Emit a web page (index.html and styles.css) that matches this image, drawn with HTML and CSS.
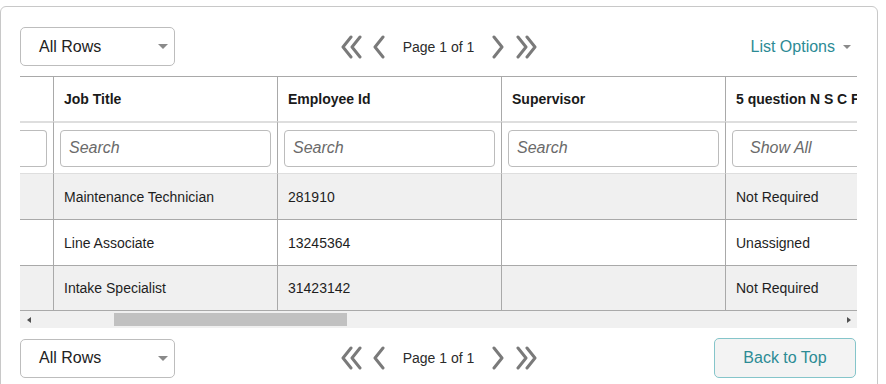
FILE: index.html
```html
<!DOCTYPE html>
<html>
<head>
<meta charset="utf-8">
<link rel="stylesheet" href="styles.css">
</head>
<body>
<div class="panel">
  <div class="toolbar">
    <div class="tb-left">
      <div class="select"><span>All Rows</span><span class="caret"></span></div>
    </div>
    <div class="pager">
      <svg class="chev dbl" width="22" height="24" viewBox="0 0 22 24"><polyline points="10,2 2,12 10,22"/><polyline points="19,2 11,12 19,22"/></svg>
      <svg class="chev" width="13" height="24" viewBox="0 0 13 24"><polyline points="11,2 3,12 11,22"/></svg>
      <span class="page-text">Page 1 of 1</span>
      <svg class="chev" width="13" height="24" viewBox="0 0 13 24"><polyline points="2,2 10,12 2,22"/></svg>
      <svg class="chev dbl" width="22" height="24" viewBox="0 0 22 24"><polyline points="3,2 11,12 3,22"/><polyline points="12,2 20,12 12,22"/></svg>
    </div>
    <div class="tb-right">
      <span class="list-options">List Options</span><span class="caret small"></span>
    </div>
  </div>

  <div class="grid-wrap">
    <table class="grid">
      <colgroup>
        <col class="c0"><col class="c1"><col class="c1"><col class="c1"><col class="c2">
      </colgroup>
      <thead>
        <tr class="head">
          <th></th><th>Job Title</th><th>Employee Id</th><th>Supervisor</th><th>5 question N S C F</th>
        </tr>
        <tr class="filters">
          <td><div class="inp stub"></div></td>
          <td><div class="inp">Search</div></td>
          <td><div class="inp">Search</div></td>
          <td><div class="inp">Search</div></td>
          <td><div class="inp showall">Show All</div></td>
        </tr>
      </thead>
      <tbody>
        <tr class="alt"><td></td><td>Maintenance Technician</td><td>281910</td><td></td><td>Not Required</td></tr>
        <tr><td></td><td>Line Associate</td><td>13245364</td><td></td><td>Unassigned</td></tr>
        <tr class="alt last"><td></td><td>Intake Specialist</td><td>31423142</td><td></td><td>Not Required</td></tr>
      </tbody>
    </table>
    <div class="hscroll">
      <span class="arrow left"></span>
      <div class="thumb"></div>
      <span class="arrow right"></span>
    </div>
  </div>

  <div class="toolbar bottom">
    <div class="tb-left">
      <div class="select"><span>All Rows</span><span class="caret"></span></div>
    </div>
    <div class="pager">
      <svg class="chev dbl" width="22" height="24" viewBox="0 0 22 24"><polyline points="10,2 2,12 10,22"/><polyline points="19,2 11,12 19,22"/></svg>
      <svg class="chev" width="13" height="24" viewBox="0 0 13 24"><polyline points="11,2 3,12 11,22"/></svg>
      <span class="page-text">Page 1 of 1</span>
      <svg class="chev" width="13" height="24" viewBox="0 0 13 24"><polyline points="2,2 10,12 2,22"/></svg>
      <svg class="chev dbl" width="22" height="24" viewBox="0 0 22 24"><polyline points="3,2 11,12 3,22"/><polyline points="12,2 20,12 12,22"/></svg>
    </div>
    <div class="tb-right">
      <button class="back-top">Back to Top</button>
    </div>
  </div>
</div>
</body>
</html>
```

FILE: styles.css
```css
* { box-sizing: border-box; }
html, body { margin: 0; padding: 0; background: #fff; }
body {
  font-family: "Liberation Sans", Arial, sans-serif;
  color: #222;
  overflow: hidden;
  height: 384px;
}
.panel {
  margin-top: 6px;
  width: 878px;
  height: 384px;
  border: 1px solid #c8c8c8;
  border-radius: 6px;
  padding: 20px 19px 0 19px;
}
.toolbar {
  display: grid;
  grid-template-columns: 1fr auto 1fr;
  align-items: center;
  height: 39px;
}
.toolbar.bottom { margin-top: 10px; height: 40px; }
.tb-left { display: flex; }
.tb-right { display: flex; justify-content: flex-end; align-items: center; }
.select {
  width: 155px;
  height: 39px;
  border: 1px solid #bdbdbd;
  border-radius: 5px;
  display: flex;
  align-items: center;
  justify-content: space-between;
  padding: 0 6px 0 18px;
  font-size: 16px;
  color: #222;
}
.caret {
  width: 0; height: 0;
  border-left: 5px solid transparent;
  border-right: 5px solid transparent;
  border-top: 5px solid #8a8a8a;
}
.caret.small {
  border-left-width: 4px;
  border-right-width: 4px;
  border-top-width: 4px;
  margin-left: 8px;
  margin-right: 7px;
}
.pager {
  display: flex;
  align-items: center;
  height: 39px;
}
.chev { display: block; }
.chev polyline {
  fill: none;
  stroke: #7a7a7a;
  stroke-width: 3;
  stroke-linecap: round;
  stroke-linejoin: round;
}
.pager .chev.dbl:first-child { margin-right: 9px; }
.page-text {
  font-size: 14px;
  color: #2b2b2b;
  margin: 0 18px;
}
.pager .chev.dbl:last-child { margin-left: 10px; }
.list-options {
  font-size: 16px;
  color: #2c8b95;
}
.grid-wrap {
  margin-top: 10px;
  width: 837px;
  overflow: hidden;
}
.grid {
  table-layout: fixed;
  border-collapse: separate;
  border-spacing: 0;
  width: 950px;
  font-size: 14px;
}
col.c0 { width: 34px; }
col.c1 { width: 224px; }
col.c2 { width: 244px; }
.grid th, .grid td {
  border-right: 1px solid #a9a9a9;
  padding: 0 10px;
  text-align: left;
  white-space: nowrap;
  overflow: hidden;
  vertical-align: middle;
}
.grid tr > :last-child { border-right: none; }
.head th {
  border-top: 1px solid #a9a9a9;
  height: 45px;
  font-size: 14px;
  font-weight: bold;
  color: #1a1a1a;
}
.filters td {
  border-top: 2px solid #dedede;
  border-bottom: 1px solid #dedede;
  height: 53px;
  padding: 0 6px;
}
.filters td:first-child { padding: 0 6px 0 0; }
.inp {
  height: 37px;
  border: 1px solid #bcbcbc;
  border-radius: 4px;
  font-size: 16px;
  font-style: italic;
  color: #6a6a6a;
  display: flex;
  align-items: center;
  padding-left: 8px;
  background: #fff;
}
.inp.stub { border-left: none; border-top-left-radius: 0; border-bottom-left-radius: 0; }
.inp.showall { padding-left: 17px; width: 200px; }
tbody td {
  height: 46px;
  border-bottom: 1px solid #a9a9a9;
  color: #1e1e1e;
}
tbody tr.last td { height: 45px; }
tbody tr.alt td { background: #f0f0f0; }
.hscroll {
  height: 17px;
  background: #f0f0f0;
  display: flex;
  align-items: center;
  padding: 0 6px 0 7px;
}
.thumb {
  height: 13px;
  width: 233px;
  background: #c1c1c1;
  margin-left: 83px;
}
.arrow {
  width: 0; height: 0;
  border-top: 3px solid transparent;
  border-bottom: 3px solid transparent;
}
.arrow.left { border-right: 4px solid #505050; }
.arrow.right { border-left: 4px solid #505050; margin-left: auto; }
.back-top {
  width: 142px;
  height: 40px;
  border: 1px solid #85c5ca;
  border-radius: 5px;
  background: #f3f3f3;
  color: #2c8b95;
  font-family: "Liberation Sans", Arial, sans-serif;
  font-size: 16px;
  padding: 0;
  margin-right: 2px;
}
```
